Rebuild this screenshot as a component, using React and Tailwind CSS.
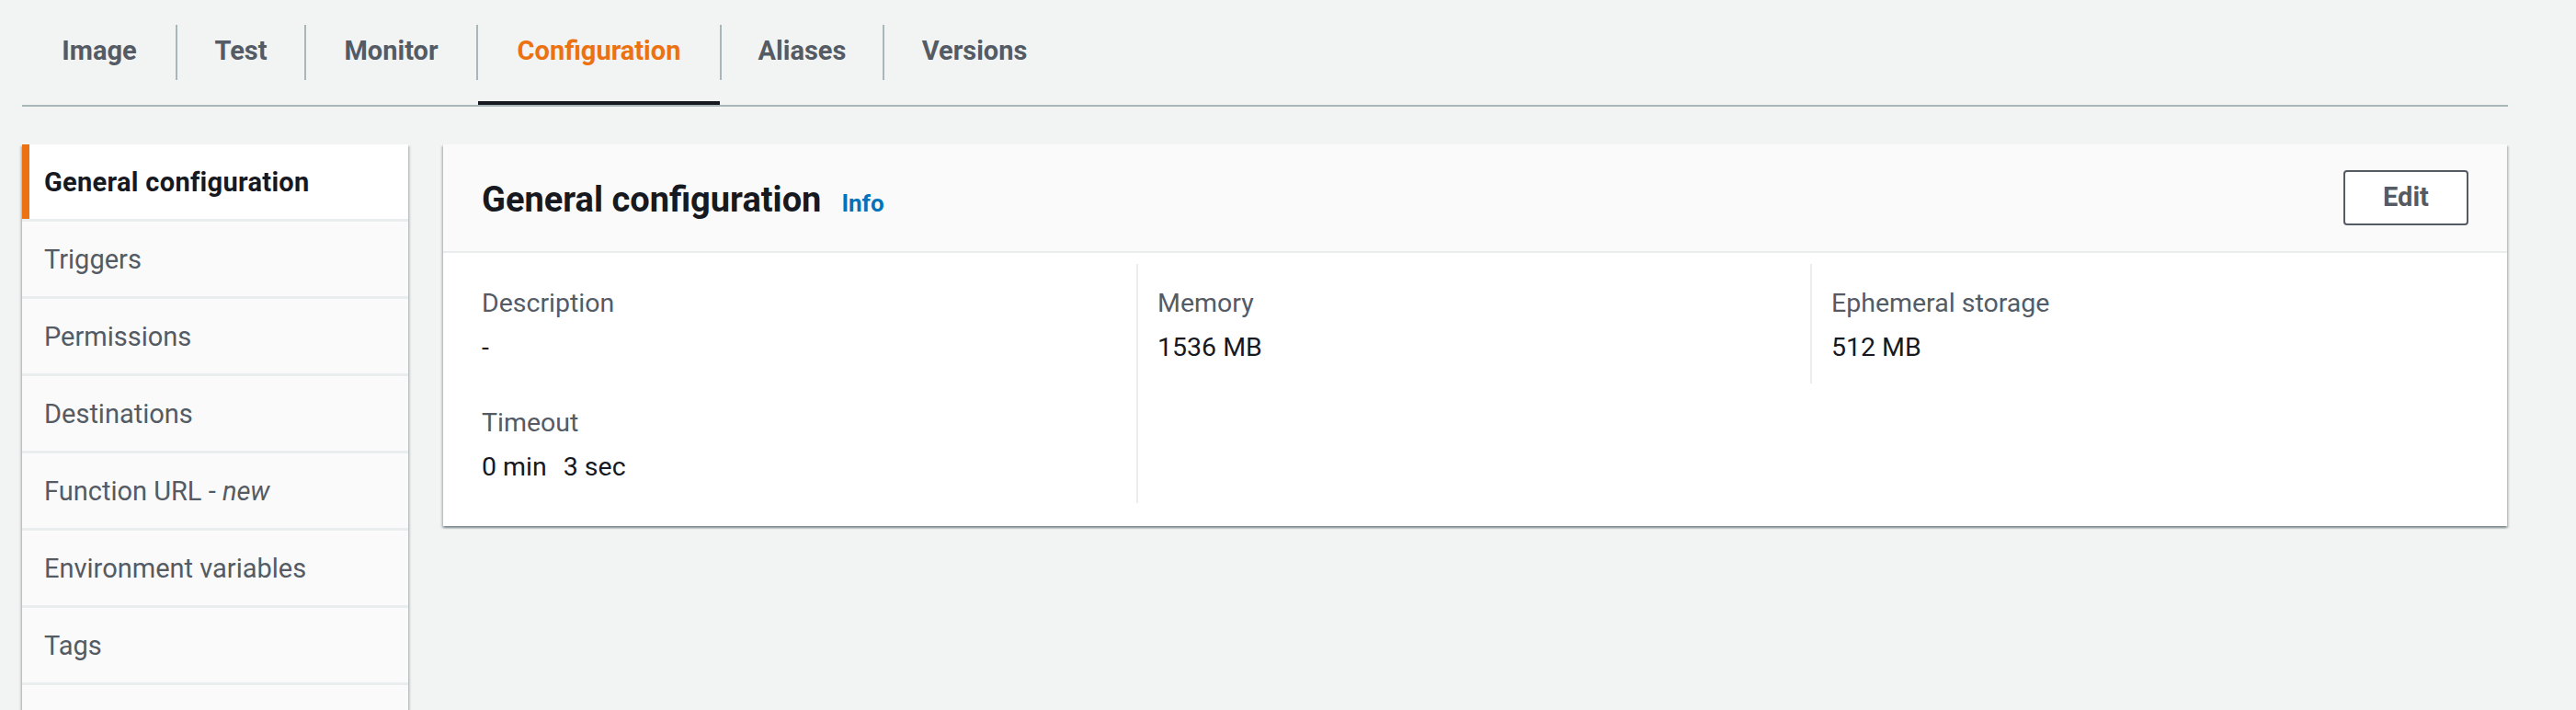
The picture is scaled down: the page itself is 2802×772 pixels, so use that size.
import React from "react";

const tabs = [
  { label: "Image", w: "w-[166px]" },
  { label: "Test", w: "w-[138px]" },
  { label: "Monitor", w: "w-[185px]" },
  { label: "Configuration", w: "w-[263px]", active: true },
  { label: "Aliases", w: "w-[175px]" },
  { label: "Versions", w: "w-[196px]" },
];

const navItems = [
  { label: "General configuration", active: true },
  { label: "Triggers" },
  { label: "Permissions" },
  { label: "Destinations" },
  { label: "Function URL", tag: "new" },
  { label: "Environment variables" },
  { label: "Tags" },
  { label: "" },
];

const Field = ({ label, children }) => (
  <div>
    <div className="text-[28.5px] leading-[40px] text-[#545b64]">{label}</div>
    <div className="mt-[8px] text-[28.5px] leading-[40px] text-[#16191f] whitespace-pre">{children}</div>
  </div>
);

export default function App() {
  return (
    <div className="h-[772px] w-full overflow-hidden bg-[#f2f3f3] font-['Roboto',_'Liberation_Sans',_sans-serif]">
      {/* tab strip */}
      <div className="pl-[25px] pr-[74px]">
        <div className="-ml-[1px] flex items-center border-b-2 border-[#aab7b8] pl-[1px]">
          {tabs.map((t, i) => (
            <React.Fragment key={t.label}>
              {i > 0 && <div className="h-[60px] w-[2px] bg-[#aab7b8]" />}
              <div className={"relative flex h-[114px] items-center justify-center pb-[2px] " + t.w}>
                <span
                  className={
                    "text-[29px] font-bold " + (t.active ? "text-[#ec7211]" : "text-[#545b64]")
                  }
                >
                  {t.label}
                </span>
                {t.active && <div className="absolute inset-x-0 bottom-0 h-[4px] bg-[#16191f]" />}
              </div>
            </React.Fragment>
          ))}
        </div>
      </div>

      <div className="mt-[41px] flex items-start gap-[38px] pl-[24px] pr-[75px]">
        {/* side nav */}
        <nav className="w-[420px] shrink-0 bg-[#fafafa] shadow-[0_2px_2px_0_rgba(0,28,36,0.3),2px_2px_2px_0_rgba(0,28,36,0.15),-2px_2px_2px_0_rgba(0,28,36,0.15)]">
          {navItems.map((n, i) => (
            <div
              key={i}
              className={
                "relative flex h-[84px] items-center border-b-[3px] border-[#eaeded] pl-[24px] pt-[3px] " +
                (n.active
                  ? "bg-white text-[29px] font-bold tracking-[0.3px] text-[#16191f]"
                  : "text-[29px] text-[#545b64]")
              }
            >
              {n.active && <div className="absolute left-0 top-0 bottom-0 w-[8px] bg-[#ec7211]" />}
              <span>
                {n.label}
                {n.tag && (
                  <>
                    {" - "}
                    <em>{n.tag}</em>
                  </>
                )}
              </span>
            </div>
          ))}
        </nav>

        {/* general configuration card */}
        <section className="flex-1 bg-white shadow-[0_2px_2px_0_rgba(0,28,36,0.3),2px_2px_2px_0_rgba(0,28,36,0.15),-2px_2px_2px_0_rgba(0,28,36,0.15)]">
          <header className="flex h-[118px] items-center justify-between border-b-2 border-[#eaeded] bg-[#fafafa] px-[42px]">
            <div className="flex items-baseline gap-[22px] pt-[6px]">
              <h2 className="text-[38px] font-bold leading-[44px] text-[#16191f]">General configuration</h2>
              <a className="text-[26px] font-bold text-[#0073bb]">Info</a>
            </div>
            <button className="flex h-[60px] w-[136px] items-center justify-center rounded-[4px] border-2 border-[#545b64] bg-white text-[29px] font-bold text-[#545b64]">
              Edit
            </button>
          </header>

          <div className="grid grid-cols-3 pl-[21px] pr-[25px] pt-[12px] pb-[25px]">
            <div className="flex flex-col gap-[42px] px-[21px] pt-[23px] pb-[19px]">
              <Field label="Description">-</Field>
              <Field label="Timeout">
                0 min<span className="ml-[18px]">3 sec</span>
              </Field>
            </div>
            <div className="border-l-2 border-[#eaeded] px-[21px] pt-[23px] pb-[19px]">
              <Field label="Memory">1536 MB</Field>
            </div>
            <div className="self-start border-l-2 border-[#eaeded] px-[21px] pt-[23px] pb-[19px]">
              <Field label="Ephemeral storage">512 MB</Field>
            </div>
          </div>
        </section>
      </div>
    </div>
  );
}
